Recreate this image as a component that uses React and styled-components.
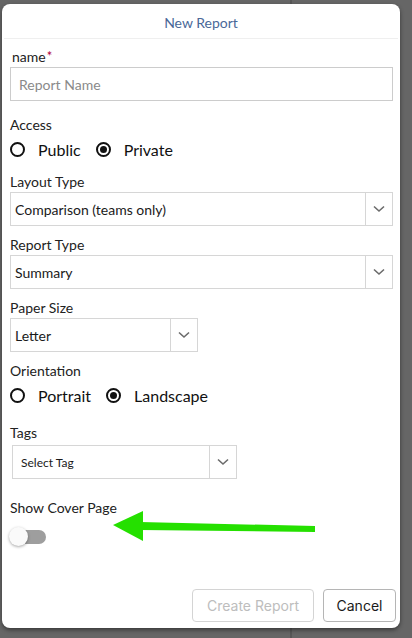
import styled, { createGlobalStyle } from "styled-components"

const GlobalStyle = createGlobalStyle`
  html, body {
    margin: 0;
    padding: 0;
  }
  body {
    background: linear-gradient(90deg, #666 0, #666 290px, #575757 290px, #575757 292px, #666 292px);
    font-family: Lato, "Noto Sans", sans-serif;
    color: #222;
  }
`

const Page = styled.div`
  width: 412px;
  height: 638px;
  padding: 4px 0 0 2px;
  box-sizing: border-box;
`

const Modal = styled.div`
  position: relative;
  width: 398px;
  height: 624px;
  background: #fff;
  border-radius: 8px;
  box-shadow: 0 2px 4px rgba(0, 0, 0, 0.45);
  display: flex;
  flex-direction: column;
  box-sizing: border-box;
`

const Header = styled.div`
  height: 35px;
  margin: 0 2px;
  border-bottom: 1px solid #efefef;
  display: flex;
  align-items: center;
  justify-content: center;
  font-size: 14px;
  color: #4a6898;
  box-sizing: border-box;
  padding-top: 3px;
`

const Body = styled.div`
  padding: 9px 7px 0 8px;
  display: flex;
  flex-direction: column;
`

const Field = styled.div`
  display: flex;
  flex-direction: column;
  margin-bottom: ${p => p.$gap ?? 10}px;
`

const Label = styled.div`
  font-size: 14px;
  line-height: 18px;
  height: 18px;
  margin-bottom: ${p => p.$space ?? 1}px;
  padding-left: ${p => p.$indent ?? 0}px;
`

const Required = styled.span`
  color: #b0003a;
  font-size: 13px;
  margin-left: 1px;
  vertical-align: top;
  line-height: 16px;
`

const TextInput = styled.input`
  height: 34px;
  box-sizing: border-box;
  border: 1px solid #ccc;
  padding: 0 8px;
  font-family: Lato, sans-serif;
  font-size: 14px;
  outline: none;
  &::placeholder {
    color: #8a8a8a;
  }
`

const RadioRow = styled.div`
  display: flex;
  align-items: center;
  height: 20px;
  gap: 15px;
`

const RadioOption = styled.label`
  display: flex;
  align-items: center;
  gap: 13px;
  font-size: 16px;
  color: #111;
`

const RadioCircle = styled.span`
  width: 15px;
  height: 15px;
  box-sizing: border-box;
  border: 2px solid #111;
  border-radius: 50%;
  display: flex;
  align-items: center;
  justify-content: center;
  &::after {
    content: "";
    width: 7px;
    height: 7px;
    border-radius: 50%;
    background: ${p => (p.$checked ? "#111" : "transparent")};
  }
`

const Select = styled.div`
  display: flex;
  height: 34px;
  width: ${p => p.$width || "100%"};
  margin-left: ${p => p.$offset || 0}px;
  box-sizing: border-box;
  border: 1px solid #d6d6d6;
`

const SelectValue = styled.div`
  flex: 1;
  display: flex;
  align-items: center;
  padding-left: ${p => (p.$small ? 8 : 4)}px;
  font-size: ${p => (p.$small ? 12 : 14)}px;
  color: #1a1a1a;
`

const Indicator = styled.div`
  width: 26px;
  border-left: 1px solid #d6d6d6;
  display: flex;
  align-items: center;
  justify-content: center;
`

const Toggle = styled.div`
  position: relative;
  width: 38px;
  height: 20px;
  margin-left: -1px;
  margin-top: 9px;
`

const Track = styled.div`
  position: absolute;
  left: 4px;
  top: 3px;
  width: 33px;
  height: 14px;
  border-radius: 7px;
  background: #9e9e9e;
`

const Knob = styled.div`
  position: absolute;
  left: 0;
  top: 0;
  width: 19px;
  height: 19px;
  border-radius: 50%;
  background: #fafafa;
  box-shadow: 0 1px 3px rgba(0, 0, 0, 0.35);
`

const Footer = styled.div`
  margin-top: auto;
  display: flex;
  justify-content: flex-end;
  gap: 9px;
  padding: 0 4px 6px 0;
`

const Button = styled.button`
  height: 33px;
  padding: 0 12px;
  background: #fff;
  border: 1px solid ${p => (p.disabled ? "#d4d4d4" : "#b5b5b5")};
  border-radius: 4px;
  font-family: Inter, Roboto, sans-serif;
  font-size: 14px;
  color: ${p => (p.disabled ? "#bdbdbd" : "#1a1a1a")};
  width: ${p => p.$width}px;
`

const Arrow = styled.svg`
  position: absolute;
  left: 100px;
  top: 498px;
`

const Chevron = () => (
  <svg width="12" height="8" viewBox="0 0 12 8">
    <polyline points="1,1.5 6,6 11,1.5" fill="none" stroke="#6b6b6b" strokeWidth="1.6" />
  </svg>
)

const Radio = ({ label, checked }) => (
  <RadioOption>
    <RadioCircle $checked={checked} />
    {label}
  </RadioOption>
)

export default function App() {
  return (
    <Page>
      <GlobalStyle />
      <Modal>
        <Header>New Report</Header>
        <Body>
          <Field $gap={15}>
            <Label $indent={2}>
              name<Required>*</Required>
            </Label>
            <TextInput placeholder="Report Name" />
          </Field>
          <Field $gap={14}>
            <Label $space={5}>Access</Label>
            <RadioRow>
              <Radio label="Public" />
              <Radio label="Private" checked />
            </RadioRow>
          </Field>
          <Field>
            <Label>Layout Type</Label>
            <Select>
              <SelectValue>Comparison (teams only)</SelectValue>
              <Indicator><Chevron /></Indicator>
            </Select>
          </Field>
          <Field>
            <Label>Report Type</Label>
            <Select>
              <SelectValue>Summary</SelectValue>
              <Indicator><Chevron /></Indicator>
            </Select>
          </Field>
          <Field>
            <Label>Paper Size</Label>
            <Select $width="188px">
              <SelectValue>Letter</SelectValue>
              <Indicator><Chevron /></Indicator>
            </Select>
          </Field>
          <Field $gap={19}>
            <Label $space={5}>Orientation</Label>
            <RadioRow>
              <Radio label="Portrait" />
              <Radio label="Landscape" checked />
            </RadioRow>
          </Field>
          <Field $gap={20}>
            <Label $space={3}>Tags</Label>
            <Select $width="225px" $offset={2}>
              <SelectValue $small>Select Tag</SelectValue>
              <Indicator><Chevron /></Indicator>
            </Select>
          </Field>
          <Field $gap={0}>
            <Label>Show Cover Page</Label>
            <Toggle>
              <Track />
              <Knob />
            </Toggle>
          </Field>
        </Body>
        <Footer>
          <Button disabled $width={122}>Create Report</Button>
          <Button $width={73}>Cancel</Button>
        </Footer>
        <Arrow width="220" height="50" viewBox="0 0 220 50">
          <polygon points="11,23 41,9 41,39" fill="#25e000" />
          <polygon points="38,20 213,24 213,30 38,28" fill="#25e000" />
        </Arrow>
      </Modal>
    </Page>
  )
}
